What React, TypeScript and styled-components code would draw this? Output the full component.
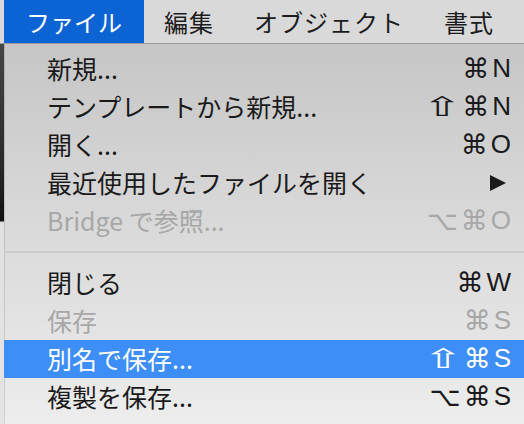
import styled, { createGlobalStyle } from "styled-components";

const GlobalStyle = createGlobalStyle`
  html, body {
    margin: 0;
    padding: 0;
    background: #d8d8d8;
  }
  body {
    font-family: "Noto Sans CJK JP", "DejaVu Sans", sans-serif;
    -webkit-font-smoothing: antialiased;
  }
`;

const Screen = styled.div`
  width: 524px;
  height: 424px;
  overflow: hidden;
  display: flex;
  flex-direction: column;
`;

const MenuBar = styled.div`
  height: 43px;
  flex-shrink: 0;
  display: flex;
  align-items: stretch;
  padding-left: 4px;
  background: #d9d9d9;
  border-bottom: 1px solid #9d9d9d;
`;

const MenuTitle = styled.div<{ $active?: boolean }>`
  display: flex;
  align-items: center;
  padding: 0 ${({ $active }) => ($active ? "22px" : "20px")};
  font-size: 24px;
  line-height: 1;
  letter-spacing: ${({ $active }) => ($active ? "0" : "1px")};
  color: ${({ $active }) => ($active ? "#ffffff" : "#1c1c1c")};
  background: ${({ $active }) => ($active ? "#0b63d4" : "transparent")};
`;

const Body = styled.div`
  flex: 1;
  display: flex;
  min-height: 0;
`;

const WindowEdge = styled.div`
  width: 4px;
  flex-shrink: 0;
  background: linear-gradient(
    to bottom,
    #454545 0px,
    #2a2a2a 120px,
    #101010 177px,
    #e0e0e0 178px,
    #e4e4e4 100%
  );
`;

const Menu = styled.div`
  flex: 1;
  padding-top: 6px;
  background: linear-gradient(to bottom, #c6c6c6 0%, #dadada 50%, #ededed 100%);
  box-shadow: inset 1px 0 0 rgba(0, 0, 0, 0.12);
`;

const Item = styled.div<{ $highlight?: boolean; $disabled?: boolean }>`
  height: 38px;
  display: flex;
  align-items: center;
  justify-content: space-between;
  padding: 0 13px 0 43px;
  font-size: 25px;
  color: ${({ $highlight, $disabled }) =>
    $highlight ? "#ffffff" : $disabled ? "#a7a7a7" : "#1a1a1a"};
  background: ${({ $highlight }) => ($highlight ? "#3d8ef6" : "transparent")};

  svg {
    margin-right: 4px;
  }
`;

const Label = styled.span`
  line-height: 1;
  padding-bottom: 2px;
  white-space: nowrap;
`;

const Shortcut = styled.span`
  display: flex;
  align-items: center;
  gap: 3px;
  line-height: 1;
  padding-bottom: 2px;
  font-family: "Liberation Sans", "DejaVu Sans", sans-serif;
  font-size: 26px;
`;

const KeyGlyph = styled.span<{ $wide?: boolean }>`
  display: inline-block;
  font-family: "DejaVu Sans", sans-serif;
  font-size: 27px;
  transform: ${({ $wide }) => ($wide ? "scaleX(1.8)" : "none")};
  margin: ${({ $wide }) => ($wide ? "0 6px 0 6px" : "0")};
`;

const Separator = styled.div`
  height: 2px;
  margin: 11px 0;
  background: #cccccc;
`;

type Entry =
  | { sep: true }
  | {
      sep?: false;
      label: string;
      keys?: string[];
      submenu?: boolean;
      disabled?: boolean;
      highlight?: boolean;
    };

const entries: Entry[] = [
  { label: "新規...", keys: ["⌘", "N"] },
  { label: "テンプレートから新規...", keys: ["⇧", "⌘", "N"] },
  { label: "開く...", keys: ["⌘", "O"] },
  { label: "最近使用したファイルを開く", submenu: true },
  { label: "Bridge で参照...", keys: ["⌥", "⌘", "O"], disabled: true },
  { sep: true },
  { label: "閉じる", keys: ["⌘", "W"] },
  { label: "保存", keys: ["⌘", "S"], disabled: true },
  { label: "別名で保存...", keys: ["⇧", "⌘", "S"], highlight: true },
  { label: "複製を保存...", keys: ["⌥", "⌘", "S"] },
];

const SubmenuArrow = () => (
  <svg width="18" height="18" viewBox="0 0 18 18">
    <polygon points="1,1 17,9 1,17" fill="currentColor" />
  </svg>
);

const titles = ["ファイル", "編集", "オブジェクト", "書式"];

export default function App() {
  return (
    <>
      <GlobalStyle />
      <Screen>
        <MenuBar>
          {titles.map((t, i) => (
            <MenuTitle key={t} $active={i === 0}>
              {t}
            </MenuTitle>
          ))}
        </MenuBar>
        <Body>
          <WindowEdge />
          <Menu>
            {entries.map((e, i) =>
              e.sep ? (
                <Separator key={i} />
              ) : (
                <Item key={i} $highlight={e.highlight} $disabled={e.disabled}>
                  <Label>{e.label}</Label>
                  {e.submenu && <SubmenuArrow />}
                  {e.keys && (
                    <Shortcut>
                      {e.keys.map((k, j) =>
                        /^[A-Z]$/.test(k) ? (
                          <span key={j}>{k}</span>
                        ) : (
                          <KeyGlyph key={j} $wide={k === "⇧"}>
                            {k}
                          </KeyGlyph>
                        )
                      )}
                    </Shortcut>
                  )}
                </Item>
              )
            )}
          </Menu>
        </Body>
      </Screen>
    </>
  );
}
